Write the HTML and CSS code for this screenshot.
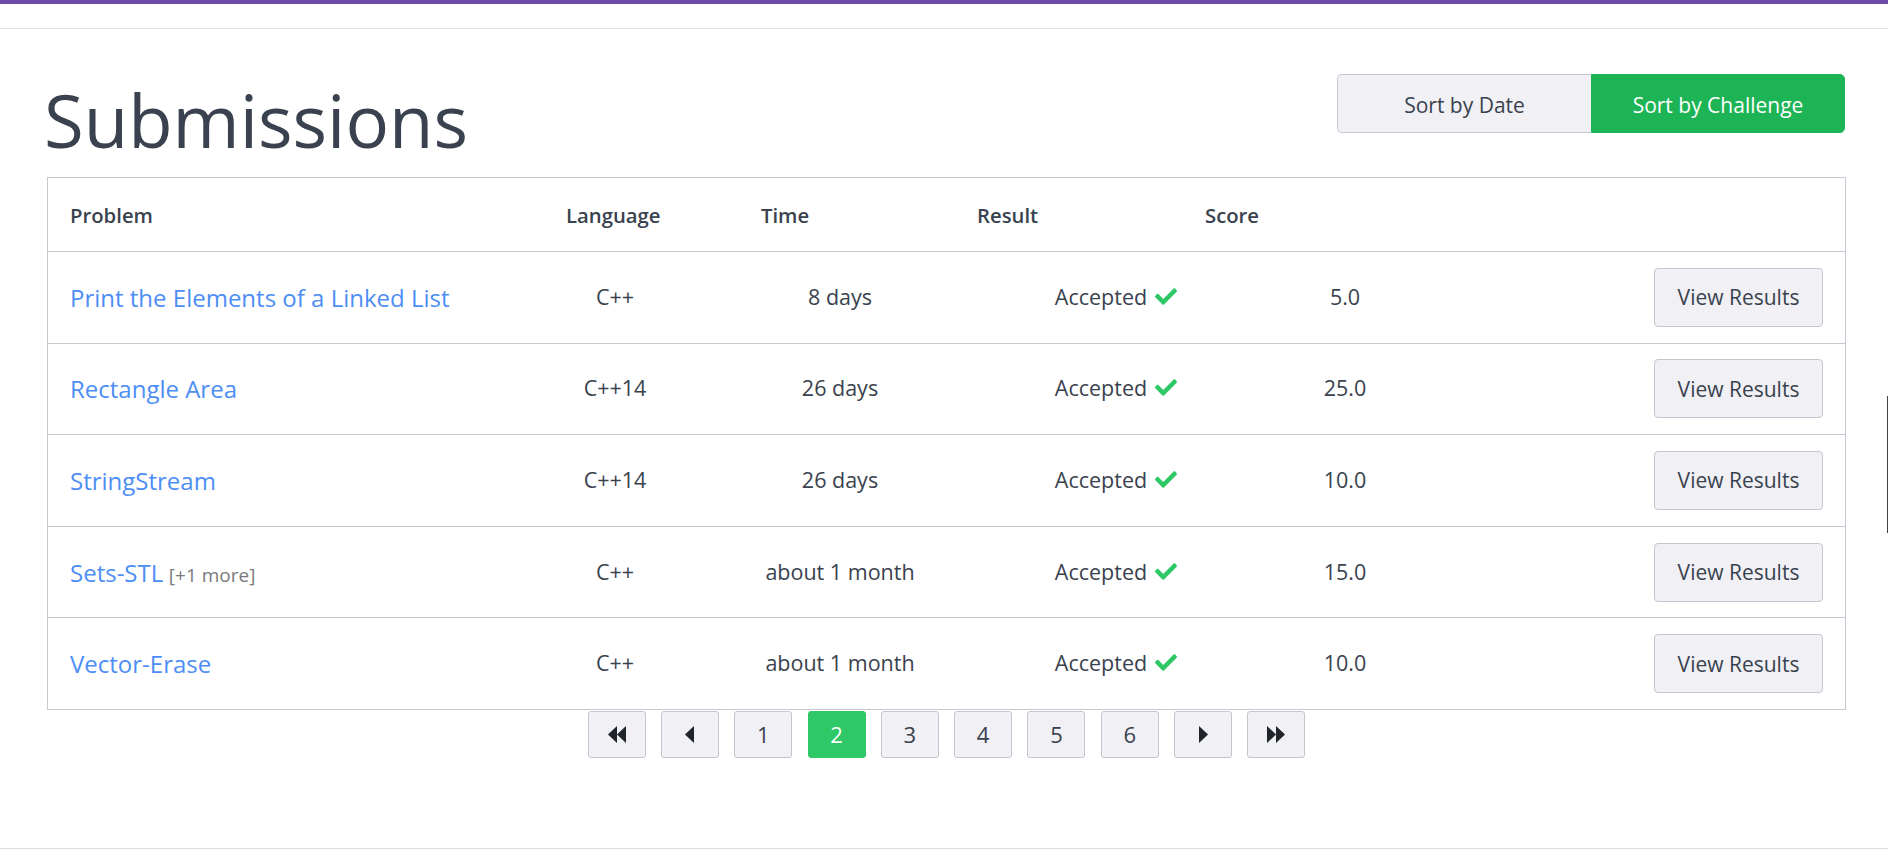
FILE: index.html
```html
<!DOCTYPE html>
<html lang="en">
<head>
<meta charset="utf-8">
<title>Submissions</title>
<link rel="stylesheet" href="styles.css">
</head>
<body>
<div class="topbar"></div>
<div class="nav"></div>
<main class="container">
  <div class="page-header">
    <h1 class="title">Submissions</h1>
    <div class="sort-group">
      <button class="sort">Sort by Date</button>
      <button class="sort active">Sort by Challenge</button>
    </div>
  </div>

  <div class="table">
    <div class="thead">
      <div class="th th-problem">Problem</div>
      <div class="th">Language</div>
      <div class="th">Time</div>
      <div class="th">Result</div>
      <div class="th">Score</div>
    </div>

    <div class="row">
      <div class="cell cell-problem"><a class="link" href="#">Print the Elements of a Linked List</a></div>
      <div class="cell">C++</div>
      <div class="cell">8 days</div>
      <div class="cell result">Accepted <svg class="check" viewBox="0 64 512 384"><path d="M173.9 439.4l-166.4-166.4c-10-10-10-26.2 0-36.2l36.2-36.2c10-10 26.2-10 36.2 0L192 312.7 432.1 72.6c10-10 26.2-10 36.2 0l36.2 36.2c10 10 10 26.2 0 36.2l-294.4 294.4c-10 10-26.2 10-36.2 0z"/></svg></div>
      <div class="cell">5.0</div>
      <div class="cell cell-action"><button class="btn">View Results</button></div>
    </div>

    <div class="row">
      <div class="cell cell-problem"><a class="link" href="#">Rectangle Area</a></div>
      <div class="cell">C++14</div>
      <div class="cell">26 days</div>
      <div class="cell result">Accepted <svg class="check" viewBox="0 64 512 384"><path d="M173.9 439.4l-166.4-166.4c-10-10-10-26.2 0-36.2l36.2-36.2c10-10 26.2-10 36.2 0L192 312.7 432.1 72.6c10-10 26.2-10 36.2 0l36.2 36.2c10 10 10 26.2 0 36.2l-294.4 294.4c-10 10-26.2 10-36.2 0z"/></svg></div>
      <div class="cell">25.0</div>
      <div class="cell cell-action"><button class="btn">View Results</button></div>
    </div>

    <div class="row">
      <div class="cell cell-problem"><a class="link" href="#">StringStream</a></div>
      <div class="cell">C++14</div>
      <div class="cell">26 days</div>
      <div class="cell result">Accepted <svg class="check" viewBox="0 64 512 384"><path d="M173.9 439.4l-166.4-166.4c-10-10-10-26.2 0-36.2l36.2-36.2c10-10 26.2-10 36.2 0L192 312.7 432.1 72.6c10-10 26.2-10 36.2 0l36.2 36.2c10 10 10 26.2 0 36.2l-294.4 294.4c-10 10-26.2 10-36.2 0z"/></svg></div>
      <div class="cell">10.0</div>
      <div class="cell cell-action"><button class="btn">View Results</button></div>
    </div>

    <div class="row">
      <div class="cell cell-problem"><a class="link" href="#">Sets-STL</a> <span class="more">[+1 more]</span></div>
      <div class="cell">C++</div>
      <div class="cell">about 1 month</div>
      <div class="cell result">Accepted <svg class="check" viewBox="0 64 512 384"><path d="M173.9 439.4l-166.4-166.4c-10-10-10-26.2 0-36.2l36.2-36.2c10-10 26.2-10 36.2 0L192 312.7 432.1 72.6c10-10 26.2-10 36.2 0l36.2 36.2c10 10 10 26.2 0 36.2l-294.4 294.4c-10 10-26.2 10-36.2 0z"/></svg></div>
      <div class="cell">15.0</div>
      <div class="cell cell-action"><button class="btn">View Results</button></div>
    </div>

    <div class="row">
      <div class="cell cell-problem"><a class="link" href="#">Vector-Erase</a></div>
      <div class="cell">C++</div>
      <div class="cell">about 1 month</div>
      <div class="cell result">Accepted <svg class="check" viewBox="0 64 512 384"><path d="M173.9 439.4l-166.4-166.4c-10-10-10-26.2 0-36.2l36.2-36.2c10-10 26.2-10 36.2 0L192 312.7 432.1 72.6c10-10 26.2-10 36.2 0l36.2 36.2c10 10 10 26.2 0 36.2l-294.4 294.4c-10 10-26.2 10-36.2 0z"/></svg></div>
      <div class="cell">10.0</div>
      <div class="cell cell-action"><button class="btn">View Results</button></div>
    </div>
  </div>

  <nav class="pagination">
    <button class="page"><svg class="ico-dbl" viewBox="0 0 18 17"><path d="M0 8.5L9 0v17zM9 8.5L18 0v17z"/></svg></button>
    <button class="page"><svg class="ico-one" viewBox="0 0 9 17"><path d="M0 8.5L9 0v17z"/></svg></button>
    <button class="page">1</button>
    <button class="page current">2</button>
    <button class="page">3</button>
    <button class="page">4</button>
    <button class="page">5</button>
    <button class="page">6</button>
    <button class="page"><svg class="ico-one" viewBox="0 0 9 17"><path d="M9 8.5L0 0v17z"/></svg></button>
    <button class="page"><svg class="ico-dbl" viewBox="0 0 18 17"><path d="M9 8.5L0 0v17zM18 8.5L9 0v17z"/></svg></button>
  </nav>
</main>
<footer class="footer"></footer>
<div class="scroll-thumb"></div>
</body>
</html>
```
FILE: styles.css
```css
* { box-sizing: border-box; }

body {
  margin: 0;
  font-family: "Open Sans", "Liberation Sans", sans-serif;
  color: #39424e;
  background: #fff;
}

.topbar {
  height: 4px;
  background: #6d4ba6;
}

.nav {
  height: 25px;
  border-bottom: 1px solid #e3e4e8;
}

.container {
  margin-left: 47px;
  width: 1799px;
}

.page-header {
  display: flex;
  justify-content: space-between;
  align-items: flex-start;
  padding-top: 45px;
  margin-bottom: 17px;
}

.title {
  margin: 6px 0 0 -3px;
  font-size: 72.5px;
  line-height: 80px;
  font-weight: 400;
  color: #39424e;
}

.sort-group {
  display: flex;
  margin-right: 1px;
}

.sort {
  width: 254px;
  height: 59px;
  font-family: inherit;
  font-size: 21px;
  color: #39424e;
  background: #f0f0f5;
  border: 1px solid #c6c9d2;
  border-right: none;
  border-radius: 5px 0 0 5px;
  padding: 2px 0 0;
}

.sort.active {
  background: #1db456;
  border: 1px solid #1db456;
  color: #fff;
  border-radius: 0 5px 5px 0;
}

.table {
  border: 1px solid #c6c9d2;
}

.thead {
  display: grid;
  grid-template-columns: 518px 195px 216px 228px 1fr;
  align-items: center;
  height: 74px;
  padding-top: 1px;
  border-bottom: 1px solid #c6c9d2;
  font-size: 20.3px;
  font-weight: 600;
  color: #39424e;
}

.th-problem {
  padding-left: 22px;
}

.row {
  display: grid;
  grid-template-columns: 455px 224px 226px 326px 132px 1fr;
  align-items: center;
  height: 90.6px;
  font-size: 21.5px;
  color: #39424e;
}

.row + .row {
  border-top: 1px solid #c6c9d2;
  height: 91.6px;
}

.cell {
  text-align: center;
  margin-top: -2px;
}

.cell-problem {
  text-align: left;
  padding-left: 22px;
  margin-top: 0;
}

.link {
  color: #4d8ef5;
  text-decoration: none;
  font-size: 24px;
}

.more {
  color: #7a7a7a;
  font-size: 19px;
}

.result {
  display: flex;
  justify-content: center;
  align-items: center;
  gap: 8px;
}

.check {
  width: 22px;
  height: 17px;
  fill: #2ec866;
}

.cell-action {
  display: flex;
  justify-content: flex-end;
  padding-right: 22px;
  margin-top: 0;
}

.btn {
  width: 169px;
  height: 59px;
  font-family: inherit;
  font-size: 21px;
  color: #39424e;
  background: #f0f0f5;
  border: 1px solid #c3c6cf;
  border-radius: 4px;
  padding: 0;
}

.pagination {
  display: flex;
  justify-content: center;
  gap: 15.3px;
  margin-top: 1px;
}

.page {
  width: 58px;
  height: 47px;
  display: flex;
  align-items: center;
  justify-content: center;
  font-family: inherit;
  font-size: 22px;
  color: #39424e;
  background: #f0f0f5;
  border: 1px solid #c3c6cf;
  border-radius: 3px;
  padding: 0;
}

.page.current {
  background: #2ec866;
  border-color: #2ec866;
  color: #fff;
}

.ico-dbl {
  width: 18px;
  height: 17px;
  fill: #1f242b;
}

.ico-one {
  width: 9px;
  height: 17px;
  fill: #1f242b;
}

.footer {
  margin-top: 90px;
  border-top: 1px solid #dedede;
  height: 8px;
}

.scroll-thumb {
  position: absolute;
  top: 396px;
  right: 0;
  width: 1px;
  height: 137px;
  background: #444;
}
```
